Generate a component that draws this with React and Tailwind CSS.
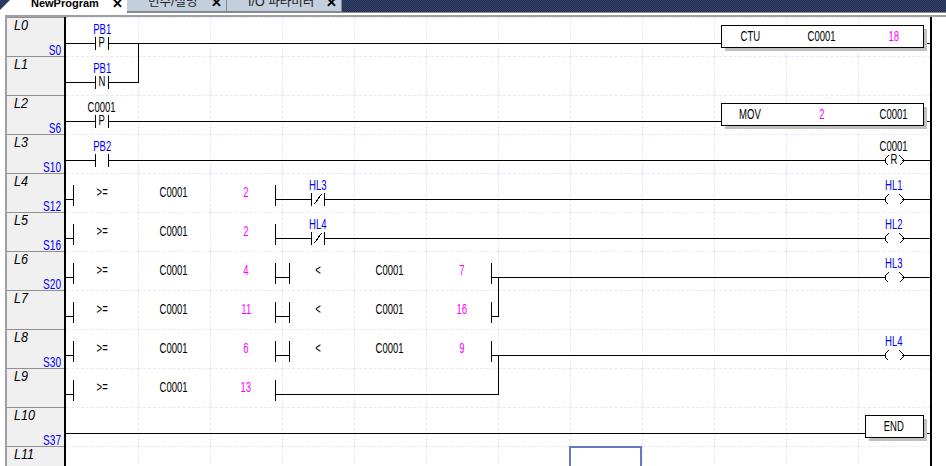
const ROW_H = 39;
const COL_W = 72;
const BLUE = 'text-[#0000ff]';
const PINK = 'text-[#ff00ff]';
const BLACK = 'text-black';

// top: labels above the wire [column, text, colour, text on the wire]
// mid: operands sitting in the middle of the cell [column, text, colour]
const rungs = [
  { line: 'L0', step: 'S0', top: [[0, 'PB1', BLUE, 'P']], mid: [[9, 'CTU', BLACK], [10, 'C0001', BLACK], [11, '18', PINK]] },
  { line: 'L1', top: [[0, 'PB1', BLUE, 'N']], mid: [] },
  { line: 'L2', step: 'S6', top: [[0, 'C0001', BLACK, 'P']], mid: [[9, 'MOV', BLACK], [10, '2', PINK], [11, 'C0001', BLACK]] },
  { line: 'L3', step: 'S10', top: [[0, 'PB2', BLUE], [11, 'C0001', BLACK, 'R']], mid: [] },
  { line: 'L4', step: 'S12', top: [[3, 'HL3', BLUE], [11, 'HL1', BLUE]], mid: [[0, '>=', BLACK], [1, 'C0001', BLACK], [2, '2', PINK]] },
  { line: 'L5', step: 'S16', top: [[3, 'HL4', BLUE], [11, 'HL2', BLUE]], mid: [[0, '>=', BLACK], [1, 'C0001', BLACK], [2, '2', PINK]] },
  { line: 'L6', step: 'S20', top: [[11, 'HL3', BLUE]], mid: [[0, '>=', BLACK], [1, 'C0001', BLACK], [2, '4', PINK], [3, '<', BLACK], [4, 'C0001', BLACK], [5, '7', PINK]] },
  { line: 'L7', top: [], mid: [[0, '>=', BLACK], [1, 'C0001', BLACK], [2, '11', PINK], [3, '<', BLACK], [4, 'C0001', BLACK], [5, '16', PINK]] },
  { line: 'L8', step: 'S30', top: [[11, 'HL4', BLUE]], mid: [[0, '>=', BLACK], [1, 'C0001', BLACK], [2, '6', PINK], [3, '<', BLACK], [4, 'C0001', BLACK], [5, '9', PINK]] },
  { line: 'L9', top: [], mid: [[0, '>=', BLACK], [1, 'C0001', BLACK], [2, '13', PINK]] },
  { line: 'L10', step: 'S37', top: [], mid: [[11, 'END', BLACK]] },
  { line: 'L11', top: [], mid: [] },
];

const colIndexes = [0, 1, 2, 3, 4, 5, 6, 7, 8, 9, 10, 11];
const contacts = [[0, 0], [1, 0], [2, 0], [3, 0], [4, 3], [5, 3]];

const y = (row) => row * ROW_H + 26;
const w = (row) => y(row) + 0.5;

const Tab = ({ label, active, width }) => (
  <div
    className={`flex h-[12px] shrink-0 items-end justify-between overflow-hidden pr-[4px] pl-[21px] leading-[14px] ${width} ${
      active ? 'bg-white text-[11px] font-bold text-black' : 'border-r border-b border-[#7d8796] bg-[#c3cfdd] text-[12.5px] text-[#222]'
    }`}
  >
    <span className="-translate-y-[2px] font-['Liberation_Sans','Noto_Sans_CJK_KR',sans-serif] whitespace-nowrap">{label}</span>
    <span className="-translate-y-[1px] font-['Liberation_Sans',sans-serif] text-[13px] font-bold text-black">✕</span>
  </div>
);

const Coil = ({ row }) => {
  const cx = 11 * COL_W + 36;
  const c = w(row);
  return (
    <g>
      <rect x={cx - 8} y={c - 6} width="16" height="12" fill="white" stroke="none" />
      <path d={`M${cx - 5.5} ${c - 5}L${cx - 9} ${c - 1.5}V${c + 1.5}L${cx - 5.5} ${c + 5}`} />
      <path d={`M${cx + 5.5} ${c - 5}L${cx + 9} ${c - 1.5}V${c + 1.5}L${cx + 5.5} ${c + 5}`} />
    </g>
  );
};

const Box = ({ x, row, width }) => (
  <g>
    <rect x={x + 3} y={row * ROW_H + 11.5} width={width} height="22" fill="#c0c0c0" stroke="none" />
    <rect x={x} y={row * ROW_H + 8.5} width={width} height="22" fill="white" />
  </g>
);

const Wires = () => (
  <svg className="absolute top-0 left-0" width="864" height="449" stroke="black" strokeWidth="1" fill="none" shapeRendering="crispEdges">
    <path d={`M0 ${w(0)}H655M858 ${w(0)}H864M0 ${w(1)}H72.5V${w(0)}`} />
    <path d={`M0 ${w(2)}H655M858 ${w(2)}H864`} />
    <path d={`M0 ${w(3)}H864`} />
    <path d={`M0 ${w(4)}H7M209 ${w(4)}H864`} />
    <path d={`M0 ${w(5)}H7M209 ${w(5)}H864`} />
    <path d={`M0 ${w(6)}H7M209 ${w(6)}H223M425 ${w(6)}H864`} />
    <path d={`M0 ${w(7)}H7M209 ${w(7)}H223M425 ${w(7)}H432.5V${w(6)}`} />
    <path d={`M0 ${w(8)}H7M209 ${w(8)}H223M425 ${w(8)}H864`} />
    <path d={`M0 ${w(9)}H7M209 ${w(9)}H432.5V${w(8)}`} />
    <path d={`M0 ${w(10)}H864`} />

    {contacts.map(([row, col]) => {
      const cx = col * COL_W + 36;
      return (
        <g key={row}>
          <rect x={cx - 6} y={y(row) - 6} width="12" height="13" fill="white" stroke="none" />
          <path d={`M${cx - 6.5} ${y(row) - 6}v13M${cx + 6.5} ${y(row) - 6}v13`} />
        </g>
      );
    })}
    {/* normally closed contacts */}
    {[4, 5].map((row) => (
      <path key={row} d={`M${3 * COL_W + 32.5} ${y(row) + 5}L${3 * COL_W + 39.5} ${y(row) - 5}`} />
    ))}

    {[4, 5, 6, 7, 8, 9].map((row) => (
      <path key={row} d={`M7.5 ${y(row) - 14}v21M209.5 ${y(row) - 14}v21`} />
    ))}
    {[6, 7, 8].map((row) => (
      <path key={row} d={`M223.5 ${y(row) - 14}v21M425.5 ${y(row) - 14}v21`} />
    ))}

    {[3, 4, 5, 6, 8].map((row) => (
      <Coil key={row} row={row} />
    ))}
    <Box x={655.5} row={0} width={202} />
    <Box x={655.5} row={2} width={202} />
    <Box x={799.5} row={10} width={58} />
  </svg>
);

const Rung = ({ rung }) => (
  <div className="grid h-[39px] grid-cols-[repeat(12,72px)]">
    {colIndexes.map((col) => {
      const top = rung.top.find((c) => c[0] === col);
      const mid = rung.mid.find((c) => c[0] === col);
      return (
        <div key={col} className="relative flex justify-center text-[14px] leading-[13px]">
          {top && <span className={`mt-[6px] inline-block h-[13px] scale-x-[0.68] ${top[2]}`}>{top[1]}</span>}
          {top && top[3] && <span className="absolute top-[19px] inline-block scale-x-[0.68] text-black">{top[3]}</span>}
          {mid && <span className={`mt-[13px] inline-block h-[13px] scale-x-[0.68] ${mid[2]}`}>{mid[1]}</span>}
        </div>
      );
    })}
  </div>
);

export default function App() {
  return (
    <div className="h-[466px] w-[946px] overflow-hidden bg-white font-['Liberation_Sans',sans-serif]">
      {/* tabs over the navy window frame */}
      <div className="flex h-[12px] bg-[repeating-conic-gradient(#222f52_0%_25%,#364468_0%_50%)] bg-[length:2px_2px]">
        <svg className="shrink-0" width="10" height="12">
          <polygon points="10,0 10,12 0,12 0,10" fill="white" />
        </svg>
        <Tab label="NewProgram" active width="w-[117px]" />
        <Tab label="변수/설명" width="w-[100px]" />
        <Tab label="I/O 파라미터" width="w-[115px]" />
      </div>
      <div className="ml-[5px] h-[5px] border-b-2 border-[#a0a0a0]">
        <div className="ml-[122px] h-[1px] bg-[#8a8a8a]" />
      </div>

      <div className="ml-[5px] flex">
        {/* line numbers */}
        <div className="w-[59px] shrink-0 border-l-2 border-[#a0a0a0] bg-[#f0f0f0]">
          {rungs.map((rung) => (
            <div key={rung.line} className="flex h-[39px] flex-col justify-between border-t border-[#909090] pr-[3px] pl-[7px]">
              <span className="origin-left scale-x-[0.9] text-[14px] leading-[14px] text-black italic">{rung.line}</span>
              {rung.step && <span className="origin-right scale-x-[0.72] text-right text-[14px] leading-[12px] text-[#0000ff]">{rung.step}</span>}
            </div>
          ))}
        </div>
        <div className="w-[2px] shrink-0 bg-black" />

        {/* ladder canvas */}
        <div className="relative h-[449px] w-[866px] shrink-0 overflow-hidden border-r-2 border-black">
          <div className="absolute inset-0 grid grid-cols-[repeat(12,72px)] grid-rows-[repeat(12,39px)]">
            {rungs.flatMap((rung) =>
              colIndexes.map((col) => (
                <div
                  key={`${rung.line}-${col}`}
                  className={`border-t border-dashed border-[#e6e6ff] ${col === 0 ? '' : 'border-l'}`}
                />
              )),
            )}
          </div>
          <Wires />
          <div className="relative">
            {rungs.map((rung) => (
              <Rung key={rung.line} rung={rung} />
            ))}
          </div>
          {/* cursor */}
          <div className="absolute top-[429px] left-[503px] h-[40px] w-[73px] border-2 border-[#6678c0]" />
        </div>
      </div>
    </div>
  );
}
